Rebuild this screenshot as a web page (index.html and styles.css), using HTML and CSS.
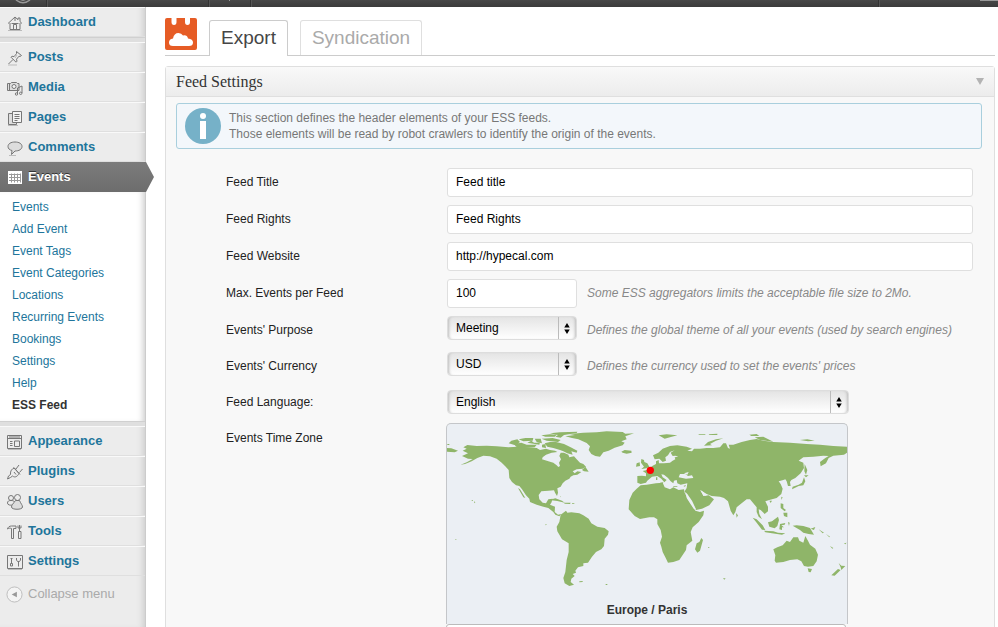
FILE: index.html
```html
<!DOCTYPE html>
<html lang="en">
<head>
<meta charset="utf-8">
<title>ESS Feed</title>
<link rel="stylesheet" href="styles.css">
</head>
<body>
<header class="topbar">
  <span class="topbar-logo"><svg width="24" height="7" viewBox="0 0 24 7"><path d="M5 0Q12 5.500 19 0" fill="none" stroke="#999" stroke-width="1.500"/><path d="M9 0l3 1 3-1" fill="#999"/></svg></span>
  <span class="topbar-site"></span>
  <span class="topbar-new"><svg width="9" height="7" viewBox="0 0 9 7"><path d="M4.500 0v1" stroke="#999"/></svg></span>
  <span class="topbar-space"></span>
  <span class="topbar-user"><i class="avatar"></i></span>
</header>
<div class="layout">
<nav class="sidebar">
  <ul class="menu">
    <li><a href="#"><svg viewBox="0 0 16 16"><path d="M1 8.500 8 2l3 2.700V3h2v3.600L15 8.500M3 8v6.500h10V8M6.500 14V9.500h3V14M4.500 8.500h7M8 2v4"/><path class="soft" d="M1 15.500h14"/></svg>Dashboard</a></li>
    <li class="separator"></li>
    <li><a href="#"><svg viewBox="0 0 16 16"><path d="M9.500 1.500l5 4-1.500 1-1-.3-2.500 3 .5 2-1 1-5-5 1-1 2 .5 2.500-3zM6 9.500 1.500 14"/><path class="soft" d="M1 15h9M8 8l2-3"/></svg>Posts</a></li>
    <li><a href="#"><svg viewBox="0 0 16 16"><path class="fill" d="M.5 3.500h3l1-1h5l1 1H12v7H.5z"/><path d="M2.500 4v6M15 6v7M10.500 8v6M10.500 8l4.500-2"/><circle class="lens" cx="7" cy="6.500" r="2"/><circle cx="9.500" cy="14" r="1.200"/><circle cx="13.700" cy="13.300" r="1.200"/></svg>Media</a></li>
    <li><a href="#"><svg viewBox="0 0 16 16"><path class="fill" d="M1.500 3.500h8v11h-8z"/><path class="lens" d="M5.500 1.500h9v11h-9z"/><path d="M7.500 4.500h5M7.500 6.500h5M7.500 8.500h5M7.500 10.500h3"/><path class="soft" d="M1 15.500h10"/></svg>Pages</a></li>
    <li><a href="#"><svg viewBox="0 0 16 16"><path class="fill" d="M8 2c4 0 7 1.700 7 4.500S12 11 8 11l-3.500 3.500.5-4C2.500 10 1 8.500 1 6.500 1 3.700 4 2 8 2z"/><path class="soft" d="M2 15.500h7"/></svg>Comments</a></li>
    <li class="current"><a href="#"><svg viewBox="0 0 16 16"><path class="calendar" d="M1 2h14v13H1z"/><path class="calendar-grid" d="M2 5.500h12M2 8.500h12M2 11.500h12M4.500 4.500v9M7.500 4.500v9M10.500 4.500v9M13.500 4.500v9"/></svg>Events</a>
      <ul class="submenu">
        <li><a href="#">Events</a></li>
        <li><a href="#">Add Event</a></li>
        <li><a href="#">Event Tags</a></li>
        <li><a href="#">Event Categories</a></li>
        <li><a href="#">Locations</a></li>
        <li><a href="#">Recurring Events</a></li>
        <li><a href="#">Bookings</a></li>
        <li><a href="#">Settings</a></li>
        <li><a href="#">Help</a></li>
        <li><a href="#" class="here">ESS Feed</a></li>
      </ul>
    </li>
    <li class="separator"></li>
    <li><a href="#"><svg viewBox="0 0 16 16"><path d="M.5 1.500h14v13H.5zM1 4.500h13M2 3h11M3 7.500h2.500M3 9.500h2.500M3 11.500h2.500M7.500 7h5v5.500h-5z"/><path class="soft" d="M1 15.500h13"/></svg>Appearance</a></li>
    <li><a href="#"><svg viewBox="0 0 16 16"><path d="M12 9.500c-1.500 3-4 4.500-6.500 2.500L3.500 13.500.5 15l1-3 2-1.500C3 7 5 4.500 7.500 4zM6.500 3.500l6.500 7M9 5l3-4M12.500 8.500l3-3.500M7 8l2 2.500"/></svg>Plugins</a></li>
    <li><a href="#"><svg viewBox="0 0 16 16"><circle cx="4" cy="4" r="2.500"/><circle cx="10.500" cy="3.500" r="3"/><path d="M6 11c-3 .5-5.500 0-5.500-2S2 6.500 4 6.500 7 7 7.500 8"/><path class="fill" d="M8.500 6.500C6 10 4.500 11 4.500 13c0 3 11 3 11 0 0-2-1.500-3-3-6.500z"/></svg>Users</a></li>
    <li><a href="#"><svg viewBox="0 0 16 16"><path d="M.5 5c.5-2 2-3 4-3H9v2.500H6.500v10h-2v-10C3 4 2 4 .5 5zM12.500 1v6M11.500 7.500h2.500v7h-2.500zM11 1.500v2.500h3V1.500"/></svg>Tools</a></li>
    <li><a href="#"><svg viewBox="0 0 16 16"><path d="M.5 1.500h15v13H.5zM4.500 4v5M3.500 4.500h2M3.500 9.500h2v2.500h-2zM11.500 8v4.500M9.500 4v2l1 1.500h2l1-1.500V4"/><path class="soft" d="M1 15.500h14"/></svg>Settings</a></li>
  </ul>
  <button class="collapse" type="button"><svg viewBox="0 0 18 18"><circle cx="9" cy="9" r="8"/><path d="M11.500 6v6L6 9z"/></svg>Collapse menu</button>
</nav>
<main class="content">
  <div class="tabs">
    <svg class="logo" viewBox="0 0 32 32"><path fill="#e65c25" d="M2 0h4.500v4q0 3 2.500 3t2.500-3V0H20v4q0 3 2.500 3T25 4V0h5q2 0 2 2v28q0 2-2 2H2q-2 0-2-2V2q0-2 2-2z"/><path fill="#fff" d="M8 28q-4 0-4-3.500t4-4q1-5.500 5.500-5.500 3 0 4.500 2.500 4-1 5 3 5 .500 5 4t-4 3.500z"/></svg>
    <a class="tab active" href="#">Export</a>
    <a class="tab" href="#">Syndication</a>
  </div>
  <section class="panel">
    <div class="panel-head"><h2>Feed Settings</h2><svg class="toggle" width="8" height="7" viewBox="0 0 8 7"><path d="M0 0h8L4 7z" fill="#b3b3b3"/></svg></div>
    <div class="info">
      <svg class="info-icon" viewBox="0 0 36 36"><circle cx="18" cy="18" r="18" fill="#76b1c8"/><circle cx="18" cy="8" r="3" fill="#fff"/><path d="M15 13h6v18h-6z" fill="#fff"/></svg>
      <p>This section defines the header elements of your ESS feeds.<br>Those elements will be read by robot crawlers to identify the origin of the events.</p>
    </div>
    <form class="form">
      <div class="row"><label for="title">Feed Title</label><div class="field"><input class="wide" id="title" type="text" value="Feed title"></div></div>
      <div class="row"><label for="rights">Feed Rights</label><div class="field"><input class="wide" id="rights" type="text" value="Feed Rights"></div></div>
      <div class="row"><label for="site">Feed Website</label><div class="field"><input class="wide" id="site" type="text" value="http://hypecal.com"></div></div>
      <div class="row"><label for="max">Max. Events per Feed</label><div class="field top"><input class="short" id="max" type="text" value="100"><em>Some ESS aggregators limits the acceptable file size to 2Mo.</em></div></div>
      <div class="row"><label for="purpose">Events' Purpose</label><div class="field top"><span class="select short"><select id="purpose"><option>Meeting</option></select><svg viewBox="0 0 6 12"><path d="M0 5h6L3 0zM0 7h6L3 12z"/></svg></span><em>Defines the global theme of all your events (used by search engines)</em></div></div>
      <div class="row"><label for="currency">Events' Currency</label><div class="field top"><span class="select short"><select id="currency"><option>USD</option></select><svg viewBox="0 0 6 12"><path d="M0 5h6L3 0zM0 7h6L3 12z"/></svg></span><em>Defines the currency used to set the events' prices</em></div></div>
      <div class="row"><label for="language">Feed Language:</label><div class="field"><span class="select medium"><select id="language"><option>English</option></select><svg viewBox="0 0 6 12"><path d="M0 5h6L3 0zM0 7h6L3 12z"/></svg></span></div></div>
      <div class="row"><label for="zone">Events Time Zone</label>
        <div class="zone">
          <div class="map">
            <svg viewBox="21 12 1200 500">
              <g class="land">
              <path d="M68 92 80 86 70 82 82 75 110 78 140 77 170 79 205 82 235 80 262 82 290 84 300 90 318 86 330 90 345 92 352 96 335 98 318 104 308 112 306 118 325 124 340 128 350 136 355 141 360 138 357 128 363 118 358 108 362 98 372 98 385 104 388 112 402 109 410 118 420 128 430 132 438 140 428 146 410 148 398 154 404 160 412 154 424 156 412 164 400 166 392 170 388 176 376 182 368 190 362 200 352 205 354 218 351 228 345 218 342 211 325 212 304 214 296 225 298 238 308 248 318 250 325 238 338 236 334 248 330 254 345 260 344 276 354 284 364 282 358 289 346 284 340 276 325 264 310 260 290 254 270 246 268 236 258 226 246 208 238 198 228 196 216 186 208 174 206 150 195 138 185 128 170 116 150 109 130 107 112 114 95 124 75 132 62 134 80 127 98 117 84 116 66 108 84 100z"/>
              <path d="M234 204 240 208 256 234 250 232zM436 140 446 155 432 154 426 150zM328 240 346 235 366 242 374 248 352 243zM372 248 392 248 390 252 374 251zM396 250h7v2h-7zM21 84 34 85 54 92 44 97 21 95zM22 72h6v3h-6zM102 244l4 3-3 3zM95 240h4v2h-4zM316 312l5 2-4 2zM46 357h3v2h-3zM418 484l10-1v3l-10 1zM497 492h5v3h-5zM360 228l3 2-1 2z"/>
              <path d="M206 70 214 62 232 58 240 66 226 76zM222 72 244 68 260 74 290 74 284 82 250 84 228 80zM236 58 256 54 280 54 278 62 250 64zM262 68 274 62 282 68 300 66 298 74zM284 56 302 56 306 70 290 66zM304 46 330 43 350 44 344 50 316 50zM305 56 338 54 362 60 354 66 320 62zM314 70 330 66 348 66 372 72 392 82 412 92 410 98 394 94 398 104 382 100 370 94 360 90 340 84 322 80zM306 74 316 72 318 84 306 82zM330 40 360 37 412 35 410 39 372 45 362 53 346 50 354 45z"/>
              <path d="M376 49 405 45 388 42 430 38 470 37 500 34 548 36 556 41 582 40 556 49 560 58 544 64 554 68 548 76 524 83 506 92 490 97 480 110 466 108 454 102 446 90 450 79 440 69 415 58 396 54zM544 95 554 90 574 92 575 98 560 101 548 98z"/>
              <path d="M362 284 378 272 382 278 394 277 418 280 430 286 446 296 454 310 472 320 494 324 506 334 504 344 494 356 492 378 484 388 468 396 456 410 444 428 430 430 430 438 414 442 406 452 408 458 398 462 404 468 394 476 392 486 402 494 388 498 374 490 370 474 376 456 380 420 386 396 386 370 366 358 352 334 350 320 358 306z"/>
              <path d="M602 196 620 194 648 190 668 188 674 202 690 208 700 202 716 210 732 208 734 218 746 240 758 258 766 272 780 276 792 272 790 286 776 306 758 322 752 336 757 362 740 376 738 390 726 408 718 420 700 426 684 428 676 412 668 396 664 380 660 368 666 350 662 330 652 312 652 298 642 292 628 292 600 297 584 288 566 268 568 240 578 218 590 206zM784 354 789 360 780 392 772 398 765 388 770 370 778 366z"/>
              <path d="M592 168 606 167 618 169 618 160 608 153 618 151 626 146 638 137 648 132 648 124 656 120 657 130 672 130 690 128 698 122 706 118 704 112 715 110 706 107 698 108 692 98 704 91 690 96 684 106 676 112 678 122 668 126 662 120 658 116 644 118 639 106 655 98 668 86 690 78 712 76 740 80 756 86 742 92 756 94 762 86 780 86 800 84 820 84 840 82 850 70 858 70 864 84 870 86 866 74 880 74 905 66 930 60 950 57 970 62 1000 66 1050 68 1100 72 1140 74 1180 78 1221 80 1221 98 1212 104 1180 107 1166 114 1158 130 1142 139 1140 126 1156 114 1166 108 1150 107 1120 110 1090 112 1076 122 1090 128 1092 144 1082 160 1066 174 1054 180 1050 186 1052 198 1044 198 1040 184 1036 178 1030 180 1016 184 1022 192 1028 206 1024 222 1010 234 988 240 976 244 984 260 984 274 974 282 962 270 956 268 958 282 966 298 956 290 950 276 950 262 940 250 930 238 920 238 902 252 890 262 886 276 880 286 872 272 864 244 852 234 840 230 815 228 800 222 782 211 790 228 806 226 822 238 808 256 786 266 768 270 760 256 748 238 738 222 734 214 740 204 742 190 722 194 712 190 710 180 702 182 700 190 692 184 684 174 672 164 664 163 668 172 680 180 673 187 664 176 652 168 636 170 622 182 618 188 602 192 592 188z"/>
              <path d="M604 117 612 120 613 126 622 130 628 140 620 145 604 147 612 140 603 128zM590 130 599 127 600 138 588 140zM648 172h4v8h-4zM660 188l10-1-2 5zM700 198h12v2h-12zM730 198l8-3-3 5z"/>
              <path d="M792 77 804 66 828 58 850 55 828 62 810 72 816 76zM656 46 680 43 712 46 690 52 674 56zM776 42h20v2h-20zM806 43l26-2v4h-24zM928 44 950 42 958 48 934 48zM944 52 970 50 1000 65 960 60zM1080 60 1102 58 1124 62 1104 64z"/>
              <path d="M1000 388 1012 382 1028 376 1040 362 1050 366 1060 352 1074 352 1078 362 1090 368 1096 348 1104 362 1110 374 1126 386 1134 404 1130 424 1120 438 1104 440 1092 438 1084 424 1072 418 1050 420 1030 426 1008 428 1004 422 1006 406zM1103 445 1116 447 1112 457 1106 456zM1196 429 1204 437 1216 438 1204 450 1202 442zM1194 447 1202 450 1184 467 1174 466z"/>
              <path d="M938 293 950 298 968 316 976 330 966 329 950 308zM972 332 1000 334 1014 338 1036 340 1026 344 996 340 976 337zM984 307 996 304 1014 290 1017 300 1012 318 1004 325 988 320zM1020 312 1036 309 1034 314 1024 316 1032 322 1026 322 1026 330 1018 328zM1044 306l5 2-2 10zM1058 317 1070 316 1090 318 1110 324 1122 344 1106 342 1090 338 1080 330zM1112 326 1126 321 1122 330zM1136 328l16 10-4 2zM1158 342l12 8-2 2zM1170 378l10 6-3 2zM1212 370l8-2-4 5z"/>
              <path d="M1022 250 1030 252 1030 264 1038 270 1034 274 1022 264zM1030 278 1042 278 1042 292 1032 288zM1024 230 1028 232 1024 240zM988 242h8l-4 7zM888 279l6 7-4 7zM1094 132 1102 150 1098 164 1093 154zM1092 166 1106 166 1098 172zM1092 172 1096 184 1090 196 1076 198 1064 204 1056 208 1058 200 1076 194 1086 188zM849 475h8l-4 4zM804 382h4v2h-4z"/>
              </g>
              <path class="water" d="M716 172 720 162 736 162 744 168 756 166 760 174 738 176zM732 160l14-4-4 8zM736 216 742 222 756 242 768 268 762 268 750 250 740 234zM780 210 790 216 800 228 790 226z"/>
              <circle cx="631" cy="151" r="11" fill="#f00"/>
            </svg>
            <strong>Europe / Paris</strong>
          </div>
          <select id="zone" class="zone-select"><option>Europe / Paris</option></select>
        </div>
      </div>
    </form>
  </section>
</main>
</div>
</body>
</html>
```
FILE: styles.css
```css
* { box-sizing: border-box; }
body {
  margin: 0;
  height: 100vh;
  overflow: hidden;
  display: flex;
  flex-direction: column;
  background: #fff;
  font: 12px/16px "Liberation Sans", Helvetica, Arial, sans-serif;
  color: #333;
}
a { text-decoration: none; color: #21759b; }
ul { list-style: none; margin: 0; padding: 0; }

.topbar {
  flex: none;
  height: 7px;
  display: flex;
  background: linear-gradient(#484848, #3b3b3b);
}
.topbar span { border-right: 1px solid #333; box-shadow: 1px 0 #555; }
.topbar svg { display: block; margin: 0 auto; }
.topbar-logo { width: 47px; }
.topbar-site { width: 162px; }
.topbar-new { width: 42px; }
.topbar-space { flex: 1; }
.topbar .topbar-user { width: 119px; border: 0; box-shadow: none; }
.avatar { display: block; width: 18px; height: 1px; margin-left: auto; background: #999; }

.layout { flex: 1; display: flex; min-height: 0; }

.sidebar {
  flex: none;
  width: 146px;
  background: #ececec;
  border-right: 1px solid #ccc;
  box-shadow: inset -6px 0 6px -4px #ccc;
}
.menu > li > a {
  display: flex;
  align-items: center;
  gap: 5px;
  height: 30px;
  padding: 0 0 1px 7px;
  border-top: 1px solid #f9f9f9;
  border-bottom: 1px solid #dfdfdf;
  font-size: 13px;
  font-weight: bold;
}
.menu svg {
  flex: none;
  width: 16px;
  height: 16px;
  margin-top: 2px;
  fill: none;
  stroke: #777;
}
.menu .soft { stroke: #bbb; }
.menu .fill { fill: #ddd; }
.menu .lens { fill: #f4f4f4; }
.menu .calendar { fill: #fff; stroke: none; }
.menu .calendar-grid { stroke: #999; }
.menu .separator {
  height: 5px;
  background: #dfdfdf;
  border-top: 1px solid #d0d0d0;
}
.menu .current > a {
  position: relative;
  border: 0;
  padding-bottom: 0;
  margin-right: -1px;
  color: #fff;
  background: linear-gradient(#7c7c7c, #6d6d6d);
  text-shadow: 0 -1px 0 #333;
}
.menu .current > a::after {
  content: "";
  position: absolute;
  left: 100%;
  top: 0;
  width: 8px;
  height: 30px;
  background: linear-gradient(#7c7c7c, #6d6d6d);
  clip-path: polygon(0 0, 100% 50%, 0 100%);
}
.menu .current svg { margin-top: 0; }
.submenu {
  padding: 4px 0 5px;
  background: #fff;
  box-shadow: inset -6px 0 6px -4px #ccc;
}
.submenu a { display: block; padding: 3px 12px; }
.submenu .here { color: #333; font-weight: bold; }
.collapse {
  display: flex;
  align-items: center;
  gap: 5px;
  height: 36px;
  padding: 0 0 0 6px;
  border: 0;
  background: none;
  font: 13px/16px "Liberation Sans", Helvetica, Arial, sans-serif;
  color: #aaa;
}
.collapse svg { width: 17px; height: 17px; }
.collapse circle { fill: #f4f4f4; stroke: #bbb; }
.collapse path { fill: #999; }

.content { flex: 1; min-width: 0; padding: 11px 3px 0 19px; }
.tabs {
  display: flex;
  gap: 12px;
  height: 38px;
  border-bottom: 1px solid #ccc;
}
.logo { width: 32px; height: 32px; }
.tab {
  height: 35px;
  margin-top: 2px;
  padding: 0 11px;
  border: 1px solid #dfdfdf;
  border-bottom: 0;
  border-radius: 3px 3px 0 0;
  font-size: 19px;
  line-height: 33px;
  color: #aaa;
}
.tab.active {
  height: 36px;
  border-color: #ccc;
  background: #fff;
  color: #464646;
}

.panel {
  margin-top: 10px;
  border: 1px solid #dfdfdf;
  border-radius: 3px 3px 0 0;
  background: #f8f8f8;
}
.panel-head {
  display: flex;
  align-items: center;
  justify-content: space-between;
  height: 30px;
  padding: 0 10px;
  border-bottom: 1px solid #dfdfdf;
  background: linear-gradient(#f9f9f9, #ececec);
}
h2 {
  margin: 0;
  font: 16px/20px "Liberation Serif", Georgia, serif;
  color: #333;
}
.info {
  display: flex;
  align-items: center;
  gap: 8px;
  margin: 6px 12px 0 10px;
  height: 46px;
  padding-left: 8px;
  border: 1px solid #a9cfdd;
  border-radius: 3px;
  background: #f3f7fb;
  color: #777;
}
.info p { margin: 0; }
.info-icon { flex: none; width: 36px; height: 36px; }

.form {
  display: flex;
  flex-direction: column;
  gap: 8px;
  padding: 19px 21px 0 60px;
}
.row { display: grid; grid-template-columns: 221px 1fr; }
label { line-height: 28px; color: #222; }
.field { display: flex; align-items: center; gap: 10px; }
.field.top { align-items: flex-start; }
em { line-height: 28px; color: #888; }
input, select {
  font: 12px/16px "Liberation Sans", Helvetica, Arial, sans-serif;
  color: #000;
}
input {
  height: 29px;
  padding: 0 8px 2px;
  border: 1px solid #dfdfdf;
  border-radius: 3px;
  background: #fff;
}
.wide { flex: 1; min-width: 0; }
.short { width: 130px; }
.medium { width: 402px; }
.select { position: relative; height: 24px; }
.select select {
  appearance: none;
  width: 100%;
  height: 24px;
  padding: 0 8px;
  border: 1px solid #ddd;
  border-radius: 4px;
  background: linear-gradient(#e4e4e4, #fff);
  box-shadow: inset 3px 0 3px -2px #bbb, inset -3px 0 3px -2px #bbb;
}
.select::after {
  content: "";
  position: absolute;
  right: 18px;
  top: 1px;
  bottom: 1px;
  border-left: 1px solid #bbb;
}
.select svg {
  position: absolute;
  right: 7px;
  top: 7px;
  width: 6px;
  height: 11px;
  pointer-events: none;
}
.zone { width: 402px; margin: -1px 0 0 -1px; }
.map {
  border: 1px solid #c4c6c9;
  border-bottom: 0;
  border-radius: 5px 5px 0 0;
  background: #ebeff4;
  text-align: center;
}
.map svg { display: block; width: 100%; }
.map strong { display: block; padding: 11px 0 6px; }
.land { fill: #8fb569; }
.water { fill: #ebeff4; }
.zone-select {
  appearance: none;
  display: block;
  width: 400px;
  height: 28px;
  padding: 0 8px;
  border: 1px solid #bbb;
  border-radius: 3px;
  background: #fff;
}
```
